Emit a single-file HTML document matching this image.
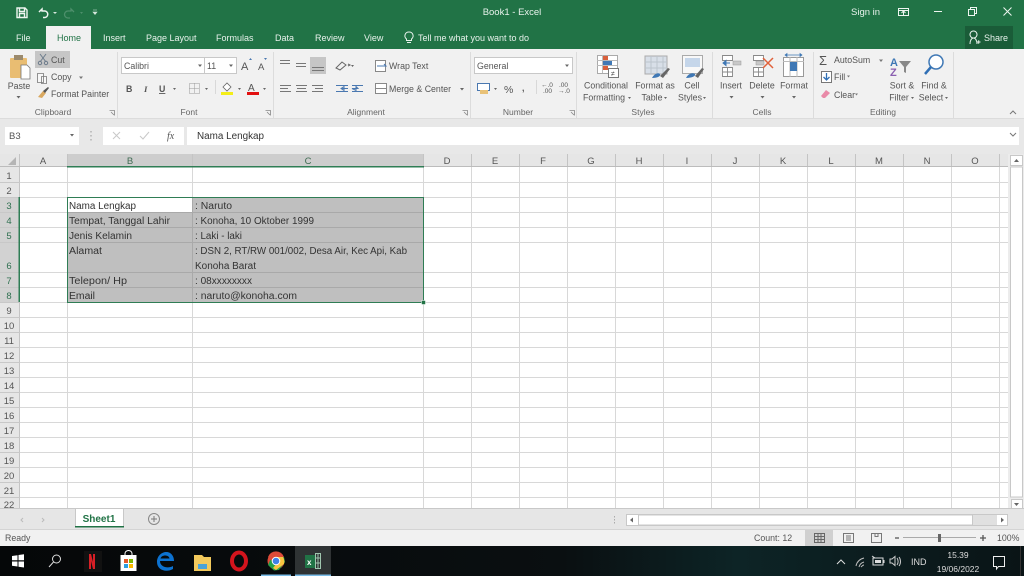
<!DOCTYPE html>
<html><head><meta charset="utf-8"><title>Book1 - Excel</title>
<style>
html,body{margin:0;padding:0;width:1024px;height:576px;overflow:hidden;background:#fff}
svg{display:block;filter:blur(.35px)}
text{font-family:"Liberation Sans",sans-serif;font-size:9px;fill:#444}
.w{fill:#e8f2ec}
.r{fill:#555;font-size:8.8px}
.g{fill:#666;font-size:8.5px}
.c{fill:#333;font-size:10px}
.h{fill:#555;font-size:9.5px;text-anchor:middle}
.m{text-anchor:middle}
.gl{stroke:#d8d8d8;stroke-width:1}
.ic{fill:none;stroke:#666;stroke-width:1}
</style></head><body>
<svg width="1024" height="576" viewBox="0 0 1024 576" xmlns="http://www.w3.org/2000/svg">
<defs>
<linearGradient id="tb" x1="0" x2="1" y1="0" y2="0"><stop offset="0" stop-color="#050708"/><stop offset=".55" stop-color="#0a0f11"/><stop offset=".72" stop-color="#0d2426"/><stop offset="1" stop-color="#0a1416"/></linearGradient>
</defs>
<!-- title bar -->
<rect width="1024" height="49" fill="#217346"/>
<rect x="46" y="26" width="45" height="23" fill="#f1f1f1"/>
<rect x="965" y="26" width="48" height="23" fill="#1a5c38"/>
<!-- qat -->
<path d="M17 8h8l2 2v7.500H17z M19.500 8v3.500h5V8 M19.500 17.500v-4h5v4" fill="none" stroke="#eef5f0" stroke-width="1.400"/>
<path d="M39 12l3-3v2h3a3.300 3.300 0 0 1 0 6.500h-2" fill="none" stroke="#eef5f0" stroke-width="1.500"/>
<path d="M53 12h4l-2 2z" fill="#d5e6dc"/>
<path d="M74 12l-3-3v2h-3a3.500 3.500 0 0 0 0 7h2" fill="none" stroke="#4d8f6b" stroke-width="1.300"/>
<path d="M80 12h3l-1.500 2z" fill="#4d8f6b"/>
<path d="M93 10h4M93 12h4l-2 2.500z" fill="#d5e6dc" stroke="#d5e6dc" stroke-width=".6"/>
<text x="512" y="15" class="w m" style="font-size:9.500px">Book1 - Excel</text>
<text x="851" y="15" class="w" style="font-size:9.500px">Sign in</text>
<path d="M898.500 8.500h10v7h-10zM898.500 10.500h10M903.500 15v-3M901.500 13l2-2 2 2" fill="none" stroke="#eef5f0"/>
<path d="M934 11.500h8" stroke="#eef5f0" fill="none"/>
<path d="M968.500 9.500h6v6h-6zM970.500 9.500v-2h6v6h-2" fill="none" stroke="#eef5f0"/>
<path d="M1003.500 7.500l8 8M1011.500 7.500l-8 8" stroke="#eef5f0" fill="none"/>
<!-- tabs -->
<text x="16" y="41" class="w">File</text>
<text x="57" y="41" fill="#217346" style="fill:#217346">Home</text>
<text x="103" y="41" class="w">Insert</text>
<text x="146" y="41" class="w">Page Layout</text>
<text x="216" y="41" class="w">Formulas</text>
<text x="275" y="41" class="w">Data</text>
<text x="315" y="41" class="w">Review</text>
<text x="364" y="41" class="w">View</text>
<path d="M406.500 39c-3-2.500-1.500-7 2.500-7s5.500 4.500 2.500 7v1.500h-5zM407 42.500h4" fill="none" stroke="#e8f2ec"/>
<text x="418" y="41" class="w">Tell me what you want to do</text>
<path d="M973.500 38a3.500 3.500 0 1 1 .01 0zM970 44c0-3.500 1.500-6 3.500-6s3.500 2.500 3.500 6M977 42h3.500M978.700 40.300v3.500" fill="none" stroke="#e8f2ec"/>
<text x="984" y="41" class="w">Share</text>

<!-- ribbon -->
<rect y="49" width="1024" height="69" fill="#f1f1f1"/>
<rect y="118" width="1024" height="1" fill="#dcdcdc"/>
<rect y="119" width="1024" height="35" fill="#e8e8e8"/>
<path d="M117.500 52v66M273.500 52v66M470.500 52v66M576.500 52v66M712.500 52v66M813.500 52v66M953.500 52v66" stroke="#dcdcdc"/>
<!-- clipboard -->
<rect x="10" y="58" width="17" height="20" rx="1" fill="#e9bd72"/>
<rect x="14" y="55" width="9" height="5" fill="#9b8a6d"/>
<path d="M21 65h6l3 3v11h-9z" fill="#fff" stroke="#777" stroke-width=".8"/>
<text x="19" y="89" class="m r">Paste</text>
<path d="M16.500 96h4l-2 2.500z" fill="#666"/>
<rect x="35" y="51" width="35" height="17" fill="#c6c6c6"/>
<path d="M40 54l6 8M46 54l-6 8" stroke="#6d7c8c" fill="none"/><circle cx="40" cy="63" r="1.700" fill="none" stroke="#6d7c8c"/><circle cx="46" cy="63" r="1.700" fill="none" stroke="#6d7c8c"/>
<text x="51" y="63" class="r">Cut</text>
<path d="M37.500 73.500h6v9h-6zM41.500 76.500h5v7h-5z" fill="#f7f7f7" stroke="#777" stroke-width=".8"/>
<text x="51" y="80" class="r">Copy</text><path d="M79 76.500h4l-2 2.500z" fill="#777"/>
<path d="M38 97l5-6 3 2-4 5z" fill="#d9a860"/><path d="M43 91l5-4 1 1-4 5z" fill="#555"/>
<text x="51" y="97" class="r">Format Painter</text>
<text x="53" y="115" class="m g">Clipboard</text>
<path d="M109.500 110.500h5v5M111 112l3 3" fill="none" stroke="#888" stroke-width=".8"/>
<!-- font -->
<rect x="121.500" y="57.500" width="83" height="16" fill="#fff" stroke="#c8c8c8"/>
<rect x="204.500" y="57.500" width="32" height="16" fill="#fff" stroke="#c8c8c8"/>
<text x="124" y="69" class="r">Calibri</text><text x="207" y="69" class="r">11</text>
<path d="M198 64.500h4l-2 2.500zM229 64.500h4l-2 2.500z" fill="#666"/>
<text x="241" y="70" class="r" style="font-size:11px">A</text><path d="M249 60l1.500-2 1.500 2z" fill="#4a78b0"/>
<text x="258" y="70" class="r" style="font-size:9.500px">A</text><path d="M264 58l1.500 2 1.500-2z" fill="#4a78b0"/>
<text x="126" y="92" class="r" style="font-weight:bold">B</text>
<text x="144" y="92" class="r" style="font-style:italic;font-family:'Liberation Serif',serif;font-weight:bold">I</text>
<text x="159" y="92" class="r" style="text-decoration:underline;font-weight:bold">U</text>
<path d="M173 88h3l-1.500 2zM205 88h3l-1.500 2zM238 88h3l-1.500 2zM263 88h3l-1.500 2z" fill="#666"/>
<path d="M189.500 83.500h10v10h-10zM194.500 83.500v10M189.500 88.500h10" fill="none" stroke="#999" stroke-dasharray="1 1"/>
<path d="M215.500 80v14" stroke="#d8d8d8"/>
<path d="M223 87l4-4 4 4-4 4z" fill="#fff" stroke="#666" stroke-width=".8"/><rect x="221" y="92" width="12" height="3" fill="#f4ee18"/>
<text x="248" y="91" class="r" style="font-size:10px;fill:#555">A</text><rect x="247" y="92" width="12" height="3" fill="#e21010"/>
<text x="189" y="115" class="m g">Font</text>
<path d="M265.500 110.500h5v5M267 112l3 3" fill="none" stroke="#888" stroke-width=".8"/>
<!-- alignment -->
<rect x="310" y="57" width="16" height="17" fill="#c6c6c6"/>
<path d="M280 60.500h10M280 63.500h10M296 63.500h10M296 66.500h10M312 67.500h12M312 70.500h12M280 85.500h11M280 88.500h8M280 91.500h11M296 85.500h11M297 88.500h9M296 91.500h11M312 85.500h11M315 88.500h8M312 91.500h11" stroke="#777" fill="none"/>
<path d="M336 68l6-6 4 3-6 5zM348 64l2 1-2 1" fill="none" stroke="#666"/><path d="M351 65h3l-1.500 2z" fill="#666"/>
<path d="M336 85.500h12M336 91.500h12M341 88.500h7M341 88.500l3-2v4z" stroke="#4a78b0" fill="none"/>
<path d="M352 85.500h11M352 91.500h11M352 88.500h6l-2-2v4z" stroke="#4a78b0" fill="none"/>
<rect x="375.500" y="60.500" width="10" height="11" fill="#fff" stroke="#888"/><path d="M377 66h9l-2-2" fill="none" stroke="#4a78b0"/>
<text x="389" y="69" class="r">Wrap Text</text>
<rect x="375.500" y="83.500" width="11" height="10" fill="#fff" stroke="#888"/><path d="M375.500 88.500h11" stroke="#888"/>
<text x="389" y="92" class="r">Merge &amp; Center</text><path d="M460 88h4l-2 2.500z" fill="#666"/>
<text x="366" y="115" class="m g">Alignment</text>
<path d="M462.500 110.500h5v5M464 112l3 3" fill="none" stroke="#888" stroke-width=".8"/>
<!-- number -->
<rect x="474.500" y="57.500" width="98" height="16" fill="#fff" stroke="#c8c8c8"/>
<text x="477" y="69" class="r">General</text><path d="M565 64.500h4l-2 2.500z" fill="#666"/>
<rect x="477.500" y="83.500" width="12" height="7" fill="#fff" stroke="#4a78b0"/><rect x="480" y="90" width="8" height="4" fill="#e9c278"/>
<path d="M494 88h3l-1.500 2z" fill="#666"/>
<text x="504" y="93" class="r" style="font-size:10.500px">%</text>
<text x="522" y="91" class="r" style="font-weight:bold">,</text>
<path d="M536.500 80v14" stroke="#d8d8d8"/>
<text x="541" y="87" class="r" style="font-size:6.500px">←.0</text><text x="543" y="93" class="r" style="font-size:6.500px">.00</text>
<text x="559" y="87" class="r" style="font-size:6.500px">.00</text><text x="558" y="93" class="r" style="font-size:6.500px">→.0</text>
<text x="518" y="115" class="m g">Number</text>
<path d="M569.500 110.500h5v5M571 112l3 3" fill="none" stroke="#888" stroke-width=".8"/>
<!-- styles -->
<rect x="597.500" y="55.500" width="20" height="18" fill="#fff" stroke="#aaa"/>
<path d="M602.500 55v18M597 60.500h20M597 65.500h20" stroke="#bbb"/>
<rect x="603" y="56" width="5" height="4" fill="#d8603c"/><rect x="603" y="61" width="9" height="4" fill="#3f78b5"/><rect x="603" y="66" width="5" height="4" fill="#d8603c"/>
<rect x="608.500" y="68.500" width="10" height="9" fill="#fff" stroke="#777"/><text x="611" y="76" style="font-size:7px">≠</text>
<text x="606" y="88.500" class="m r">Conditional</text>
<text x="604" y="100.500" class="m r">Formatting</text><path d="M628 97h3l-1.500 2z" fill="#666"/>
<rect x="645" y="56" width="22" height="18" fill="#d8dfe8" stroke="#aaa"/><path d="M651 56v18M657 56v18M663 56v18M645 62h22M645 68h22" stroke="#bcc4cd"/>
<path d="M660 76l8-8 2 1-7 9z" fill="#666"/><path d="M652 78c2-4 6-6 8-4 1 2-2 4-8 4z" fill="#3f78b5"/>
<text x="655" y="88.500" class="m r">Format as</text>
<text x="652" y="100.500" class="m r">Table</text><path d="M664 97h3l-1.500 2z" fill="#666"/>
<rect x="682.500" y="55.500" width="20" height="18" fill="#f8f8f8" stroke="#aaa"/><rect x="685" y="58" width="15" height="9" fill="#c5d6ea"/>
<path d="M695 76l7-8 2 1-6 9z" fill="#666"/><path d="M686 78c2-4 6-6 9-4 1 2-3 4-9 4z" fill="#3f78b5"/>
<text x="692" y="88.500" class="m r">Cell</text>
<text x="690" y="100.500" class="m r">Styles</text><path d="M703 97h3l-1.500 2z" fill="#666"/>
<text x="643" y="115" class="m g">Styles</text>
<!-- cells -->
<path d="M722.500 55.500h10v5h-10zM722.500 67.500h10v9h-10zM727.500 67.500v9M722.500 72h10" fill="#fff" stroke="#888" stroke-width=".9"/>
<rect x="733" y="61" width="8" height="4" fill="#c8c8c8" stroke="#999" stroke-width=".5"/>
<path d="M723 63h7M723 63l3-2.500v5z" fill="#3f78b5" stroke="#3f78b5"/>
<text x="731" y="88.500" class="m r">Insert</text><path d="M729.500 96h4l-2 2.500z" fill="#666"/>
<path d="M753.500 55.500h10v5h-10zM753.500 67.500h10v9h-10zM758.500 67.500v9M753.500 72h10" fill="#fff" stroke="#888" stroke-width=".9"/>
<rect x="756" y="61" width="8" height="4" fill="#c8c8c8" stroke="#999" stroke-width=".5"/>
<path d="M763 58l10 10M773 58l-10 10" stroke="#e0613a" stroke-width="1.500"/>
<text x="762" y="88.500" class="m r">Delete</text><path d="M760.500 96h4l-2 2.500z" fill="#666"/>
<rect x="783.500" y="57.500" width="20" height="19" fill="#fff" stroke="#999"/><path d="M783 61.500h21M790 57v20M797 57v20" stroke="#bbb"/>
<rect x="790" y="62" width="7" height="9" fill="#3f78b5"/><path d="M785 55h17M785 55l2-1.500v3zM802 55l-2-1.500v3z" stroke="#3f78b5" fill="#3f78b5" stroke-width=".7"/>
<text x="794" y="88.500" class="m r">Format</text><path d="M792 96h4l-2 2.500z" fill="#666"/>
<text x="762" y="115" class="m g">Cells</text>
<!-- editing -->
<text x="819" y="65" class="r" style="font-size:13px;fill:#555">Σ</text>
<text x="834" y="63" class="r">AutoSum</text><path d="M879 59.500h4l-2 2.500z" fill="#777"/>
<rect x="821.500" y="71.500" width="10" height="11" fill="#fff" stroke="#777"/><path d="M826.500 73v7M823.500 77l3 3 3-3" fill="none" stroke="#2f6fb5" stroke-width="1.300"/>
<text x="834" y="80" class="r">Fill</text><path d="M847 75.500h3l-1.500 2z" fill="#777"/>
<path d="M821 96l5-6 4 3-5 5h-2z" fill="#e98aa8"/>
<text x="834" y="98" class="r">Clear</text><path d="M855 93.500h3l-1.500 2z" fill="#777"/>
<text x="890" y="66" style="font-size:11px;fill:#3f78b5;font-weight:bold">A</text>
<text x="890" y="76" style="font-size:11px;fill:#8a5fb0;font-weight:bold">Z</text>
<path d="M899 61h12l-5 6v6l-2-1v-5z" fill="#888"/>
<text x="902" y="88.500" class="m r">Sort &amp;</text>
<text x="899" y="100.500" class="m r">Filter</text><path d="M911 97h3l-1.500 2z" fill="#666"/>
<circle cx="936" cy="62" r="7" fill="#fff" stroke="#3f78b5" stroke-width="1.500"/><path d="M931 67l-6 7" stroke="#2f6fb5" stroke-width="2.500"/>
<text x="934" y="88.500" class="m r">Find &amp;</text>
<text x="931" y="100.500" class="m r">Select</text><path d="M945 97h3l-1.500 2z" fill="#666"/>
<text x="883" y="115" class="m g">Editing</text>
<path d="M1010 114l3-3 3 3" fill="none" stroke="#777"/>

<!-- formula bar -->
<rect x="5" y="127" width="74" height="18" fill="#fff"/>
<text x="9" y="139" class="r" style="font-size:9.500px">B3</text>
<path d="M70 134h4l-2 2.500z" fill="#666"/>
<path d="M91 131v1.500M91 135v1.500M91 139v1.500" stroke="#999"/>
<rect x="103" y="127" width="81" height="18" fill="#fff"/>
<path d="M113 132l7 7M120 132l-7 7" stroke="#c8c8c8"/>
<path d="M140 136l3 3 6-7" fill="none" stroke="#c8c8c8"/>
<text x="167" y="139" style="font-family:'Liberation Serif',serif;font-style:italic;font-size:10px;fill:#555">fx</text>
<rect x="187" y="127" width="832" height="18" fill="#fff"/>
<text x="197" y="139" class="c" textLength="67" lengthAdjust="spacingAndGlyphs">Nama Lengkap</text>
<path d="M1010 133l3 3 3-3" fill="none" stroke="#777"/>

<!-- sheet -->
<rect y="154" width="1024" height="13" fill="#e6e6e6"/>
<rect y="154" width="20" height="354" fill="#e6e6e6"/>
<path d="M16 157v8h-8z" fill="#b5b5b5"/>
<rect x="67" y="154" width="356" height="13" fill="#cdcdcd"/>
<rect x="0" y="197" width="19" height="105" fill="#d2d2d2"/>
<rect x="20" y="167" width="988" height="341" fill="#fff"/>
<!-- col lines -->
<path class="gl" d="M67.500 167v341M192.500 167v341M423.500 167v341M471.500 167v341M519.500 167v341M567.500 167v341M615.500 167v341M663.500 167v341M711.500 167v341M759.500 167v341M807.500 167v341M855.500 167v341M903.500 167v341M951.500 167v341M999.500 167v341"/>
<path class="gl" d="M20 182.500h988M20 197.500h988M20 212.500h988M20 227.500h988M20 242.500h988M20 272.500h988M20 287.500h988M20 302.500h988M20 317.500h988M20 332.500h988M20 347.500h988M20 362.500h988M20 377.500h988M20 392.500h988M20 407.500h988M20 422.500h988M20 437.500h988M20 452.500h988M20 467.500h988M20 482.500h988M20 497.500h988"/>
<path d="M19.500 154v354M67.500 154v13M192.500 154v13M423.500 154v13M471.500 154v13M519.500 154v13M567.500 154v13M615.500 154v13M663.500 154v13M711.500 154v13M759.500 154v13M807.500 154v13M855.500 154v13M903.500 154v13M951.500 154v13M999.500 154v13" stroke="#c4c4c4"/>
<path d="M0 182.500h20M0 197.500h20M0 212.500h20M0 227.500h20M0 242.500h20M0 272.500h20M0 287.500h20M0 302.500h20M0 317.500h20M0 332.500h20M0 347.500h20M0 362.500h20M0 377.500h20M0 392.500h20M0 407.500h20M0 422.500h20M0 437.500h20M0 452.500h20M0 467.500h20M0 482.500h20M0 497.500h20" stroke="#c8c8c8"/>
<rect y="166" width="67" height="1" fill="#bcbcbc"/><rect x="423" y="166" width="585" height="1" fill="#bcbcbc"/>
<rect x="67" y="166" width="357" height="1.500" fill="#2f7d55"/>
<rect x="18.500" y="197" width="1.500" height="105" fill="#2f7d55"/>
<!-- selection -->
<rect x="68" y="198" width="355" height="104" fill="#bfbfbf"/>
<rect x="68" y="198" width="124" height="14" fill="#fff"/>
<path d="M68 212.500h355M68 227.500h355M68 242.500h355M68 272.500h355M68 287.500h355M192.500 198v104" stroke="#a9a9a9"/>
<rect x="67.500" y="197.500" width="356" height="105" fill="none" stroke="#2f7d55"/>
<rect x="67" y="302" width="357" height="1" fill="#2f7d55"/>
<rect x="421.500" y="300.500" width="4" height="4" fill="#217346" stroke="#fff" stroke-width=".5"/>
<!-- col heads -->
<text x="43" y="164" class="h">A</text><text x="130" y="164" class="h" style="fill:#3f6b52">B</text><text x="308" y="164" class="h" style="fill:#3f6b52">C</text>
<text x="447" y="164" class="h">D</text><text x="495" y="164" class="h">E</text><text x="543" y="164" class="h">F</text><text x="591" y="164" class="h">G</text><text x="639" y="164" class="h">H</text><text x="687" y="164" class="h">I</text><text x="735" y="164" class="h">J</text><text x="783" y="164" class="h">K</text><text x="831" y="164" class="h">L</text><text x="879" y="164" class="h">M</text><text x="927" y="164" class="h">N</text><text x="975" y="164" class="h">O</text>
<!-- row heads -->
<text x="9" y="179" class="h">1</text><text x="9" y="194" class="h">2</text>
<text x="9" y="209" class="h" style="fill:#2f7050">3</text><text x="9" y="224" class="h" style="fill:#2f7050">4</text><text x="9" y="239" class="h" style="fill:#2f7050">5</text><text x="9" y="269" class="h" style="fill:#2f7050">6</text><text x="9" y="284" class="h" style="fill:#2f7050">7</text><text x="9" y="299" class="h" style="fill:#2f7050">8</text>
<text x="9" y="314" class="h">9</text><text x="9" y="329" class="h">10</text><text x="9" y="344" class="h">11</text><text x="9" y="359" class="h">12</text><text x="9" y="374" class="h">13</text><text x="9" y="389" class="h">14</text><text x="9" y="404" class="h">15</text><text x="9" y="419" class="h">16</text><text x="9" y="434" class="h">17</text><text x="9" y="449" class="h">18</text><text x="9" y="464" class="h">19</text><text x="9" y="479" class="h">20</text><text x="9" y="494" class="h">21</text><text x="9" y="508" class="h">22</text>
<!-- cells text -->
<text x="69" y="209" class="c" textLength="67" lengthAdjust="spacingAndGlyphs">Nama Lengkap</text>
<text x="69" y="224" class="c" textLength="101" lengthAdjust="spacingAndGlyphs">Tempat, Tanggal Lahir</text>
<text x="69" y="239" class="c" textLength="63" lengthAdjust="spacingAndGlyphs">Jenis Kelamin</text>
<text x="69" y="254" class="c" textLength="33" lengthAdjust="spacingAndGlyphs">Alamat</text>
<text x="69" y="284" class="c" textLength="58" lengthAdjust="spacingAndGlyphs">Telepon/ Hp</text>
<text x="69" y="299" class="c" textLength="26" lengthAdjust="spacingAndGlyphs">Email</text>
<text x="195" y="209" class="c" textLength="37" lengthAdjust="spacingAndGlyphs">: Naruto</text>
<text x="195" y="224" class="c" textLength="119" lengthAdjust="spacingAndGlyphs">: Konoha, 10 Oktober 1999</text>
<text x="195" y="239" class="c" textLength="47" lengthAdjust="spacingAndGlyphs">: Laki - laki</text>
<text x="195" y="254" class="c" textLength="212" lengthAdjust="spacingAndGlyphs">: DSN 2, RT/RW 001/002, Desa Air, Kec Api, Kab</text>
<text x="195" y="269" class="c" textLength="61" lengthAdjust="spacingAndGlyphs">Konoha Barat</text>
<text x="195" y="284" class="c" textLength="57" lengthAdjust="spacingAndGlyphs">: 08xxxxxxxx</text>
<text x="195" y="299" class="c" textLength="102" lengthAdjust="spacingAndGlyphs">: naruto@konoha.com</text>
<!-- v scrollbar -->
<rect x="1008" y="154" width="16" height="356" fill="#ececec"/>
<rect x="1010.500" y="155.500" width="12" height="10" fill="#fff" stroke="#c8c8c8"/>
<path d="M1014 162l2.500-3 2.500 3z" fill="#666"/>
<rect x="1010.500" y="167" width="12" height="330" fill="#fff" stroke="#c8c8c8"/>
<rect x="1011.500" y="499.500" width="11" height="10" fill="#fff" stroke="#c8c8c8"/>
<path d="M1014 503h5l-2.500 3z" fill="#666"/>
<!-- sheet tab bar -->
<rect y="508" width="1024" height="22" fill="#e6e6e6"/>
<rect y="508" width="1024" height="1" fill="#c8c8c8"/>
<rect y="529" width="1024" height="1" fill="#d4d4d4"/>
<path d="M23 518l-2 2 2 2M42 518l2 2-2 2" fill="none" stroke="#bbb"/>
<path d="M75.500 509v17.500h48V509" fill="#fff" stroke="#c8c8c8"/>
<rect x="75" y="526" width="49" height="1.500" fill="#217346"/>
<text x="99" y="522" class="m" style="font-weight:bold;fill:#217346;font-size:10px">Sheet1</text>
<circle cx="154" cy="519" r="5.500" fill="none" stroke="#888"/><path d="M151 519h6M154 516v6" stroke="#777"/>
<path d="M614.500 516v1.500M614.500 519v1.500M614.500 522v1.500" stroke="#aaa"/>
<rect x="626.500" y="514.500" width="381" height="11" fill="#e0e0e0" stroke="#c8c8c8"/>
<rect x="638.500" y="515" width="334" height="10" fill="#fff" stroke="#c8c8c8"/>
<rect x="627" y="515" width="11" height="10" fill="#fff"/><rect x="997" y="515" width="10" height="10" fill="#fff"/>
<path d="M633 517.500l-3 2.500 3 2.500zM1001 517.500l3 2.500-3 2.500z" fill="#666"/>
<!-- status bar -->
<rect y="530" width="1024" height="16" fill="#f1f1f1"/>
<text x="5" y="541" class="r">Ready</text>
<text x="754" y="541" class="r">Count: 12</text>
<rect x="805" y="530" width="28" height="16" fill="#d0d0d0"/>
<path d="M814.500 533.500h10v9h-10zM814.500 536.500h10M814.500 539.500h10M818 533.500v9M821 533.500v9" fill="none" stroke="#666"/>
<path d="M843.500 533.500h10v9h-10zM846 536h5M846 538h5M846 540h5" fill="none" stroke="#777"/>
<path d="M871.500 533.500h10v9h-10zM875 533.500v3h3v-3" fill="none" stroke="#777"/>
<path d="M895 538h4" stroke="#555" stroke-width="1.300"/>
<path d="M903 537.500h73" stroke="#aaa"/>
<rect x="938" y="534" width="3" height="8" fill="#666"/>
<path d="M980 538h6M983 535v6" stroke="#555" stroke-width="1.300"/>
<text x="997" y="541" class="r">100%</text>
<!-- taskbar -->
<rect y="546" width="1024" height="30" fill="url(#tb)"/>
<path d="M12 556l5.500-.8v5h-5.500zM18.500 555l5.500-.8v6h-5.500zM12 561.500h5.500v5l-5.500-.8zM18.500 561.500h5.500v6l-5.500-.8z" fill="#fff"/>
<circle cx="56.500" cy="559" r="4" fill="none" stroke="#ddd"/><path d="M53.500 562l-4.500 5" stroke="#ddd"/>
<rect x="84" y="551" width="18" height="21" fill="#111"/>
<path d="M89 554h2l2 8v-8h2v15h-2l-2-8v8h-2z" fill="#d81f26"/>
<path d="M120.500 555h16v16h-16z" fill="#fff"/><path d="M125 555v-1.500a3.500 3 0 0 1 7 0v1.500" fill="none" stroke="#fff"/>
<rect x="124" y="559" width="4" height="4" fill="#e55b2b"/><rect x="129" y="559" width="4" height="4" fill="#7eb900"/><rect x="124" y="564" width="4" height="4" fill="#2a9fe3"/><rect x="129" y="564" width="4" height="4" fill="#fbb900"/>
<path d="M174 561h-14c0 6 8 8 13 5v3c-7 4-16 1-16-7s8-12 13-9c3 2 4 5 4 8zM160.500 558.500h9c-.5-4-8-4-9 0z" fill="#0c72d0"/>
<path d="M194 555h8l2 2h7v14h-17z" fill="#f2c95c"/><rect x="198" y="564" width="9" height="5" fill="#4aa3d8"/>
<ellipse cx="239" cy="561" rx="7" ry="8.500" fill="none" stroke="#d4141d" stroke-width="4"/>
<circle cx="276" cy="561" r="8.500" fill="#dd4b39"/><path d="M268 565l4-9 12 1 1 5-6 8-5 .5z" fill="#25a148"/><path d="M276 553a8.500 8.500 0 0 1 8 11l-8 6-3-2 5-6z" fill="#f9c440"/><path d="M268 557a8.500 8.500 0 0 1 16 0h-8a4 4 0 0 0-4 4z" fill="#dd4b39"/><circle cx="276" cy="561" r="3.800" fill="#3f82e8" stroke="#fff"/>
<rect x="295" y="546" width="36" height="30" fill="#2f3334"/>
<rect x="261" y="574.500" width="30" height="1.500" fill="#7bbde8"/><rect x="295" y="574.500" width="36" height="1.500" fill="#7bbde8"/>
<rect x="305" y="555" width="11" height="13" fill="#217346"/><text x="307" y="565" style="fill:#fff;font-weight:bold;font-size:8px">x</text>
<path d="M315.500 553.500h5v15h-5zM315.500 558h5M315.500 563h5M318 553.500v15" fill="none" stroke="#9fc5ae"/>
<path d="M837 564l4-4 4 4" fill="none" stroke="#ddd"/>
<path d="M856 566c1-5 4-7 8-8M859 567c1-3 2-4 5-5M861 567c1-1 2-2 3-2" fill="none" stroke="#bbb"/>
<rect x="873" y="558" width="10" height="7" fill="none" stroke="#ddd"/><rect x="875" y="560" width="6" height="3" fill="#ddd"/><path d="M884 560v3M872 556l3 2" stroke="#ddd"/>
<path d="M890 559h2l3-2.500v9l-3-2.500h-2zM897 558c1.500 2 1.500 5 0 7M899 557c2 2.500 2 6.500 0 9" fill="none" stroke="#ccc"/>
<text x="911" y="565" style="fill:#ddd;font-size:9px">IND</text>
<text x="958" y="558" class="m" style="fill:#ddd;font-size:8.500px">15.39</text>
<text x="958" y="572" class="m" style="fill:#ddd;font-size:8.500px">19/06/2022</text>
<path d="M993.500 556.500h11v10h-6l-2 2.500v-2.500h-3z" fill="none" stroke="#eee"/>
<rect x="1020" y="546" width="1" height="30" fill="#333"/>
</svg>
</body></html>
